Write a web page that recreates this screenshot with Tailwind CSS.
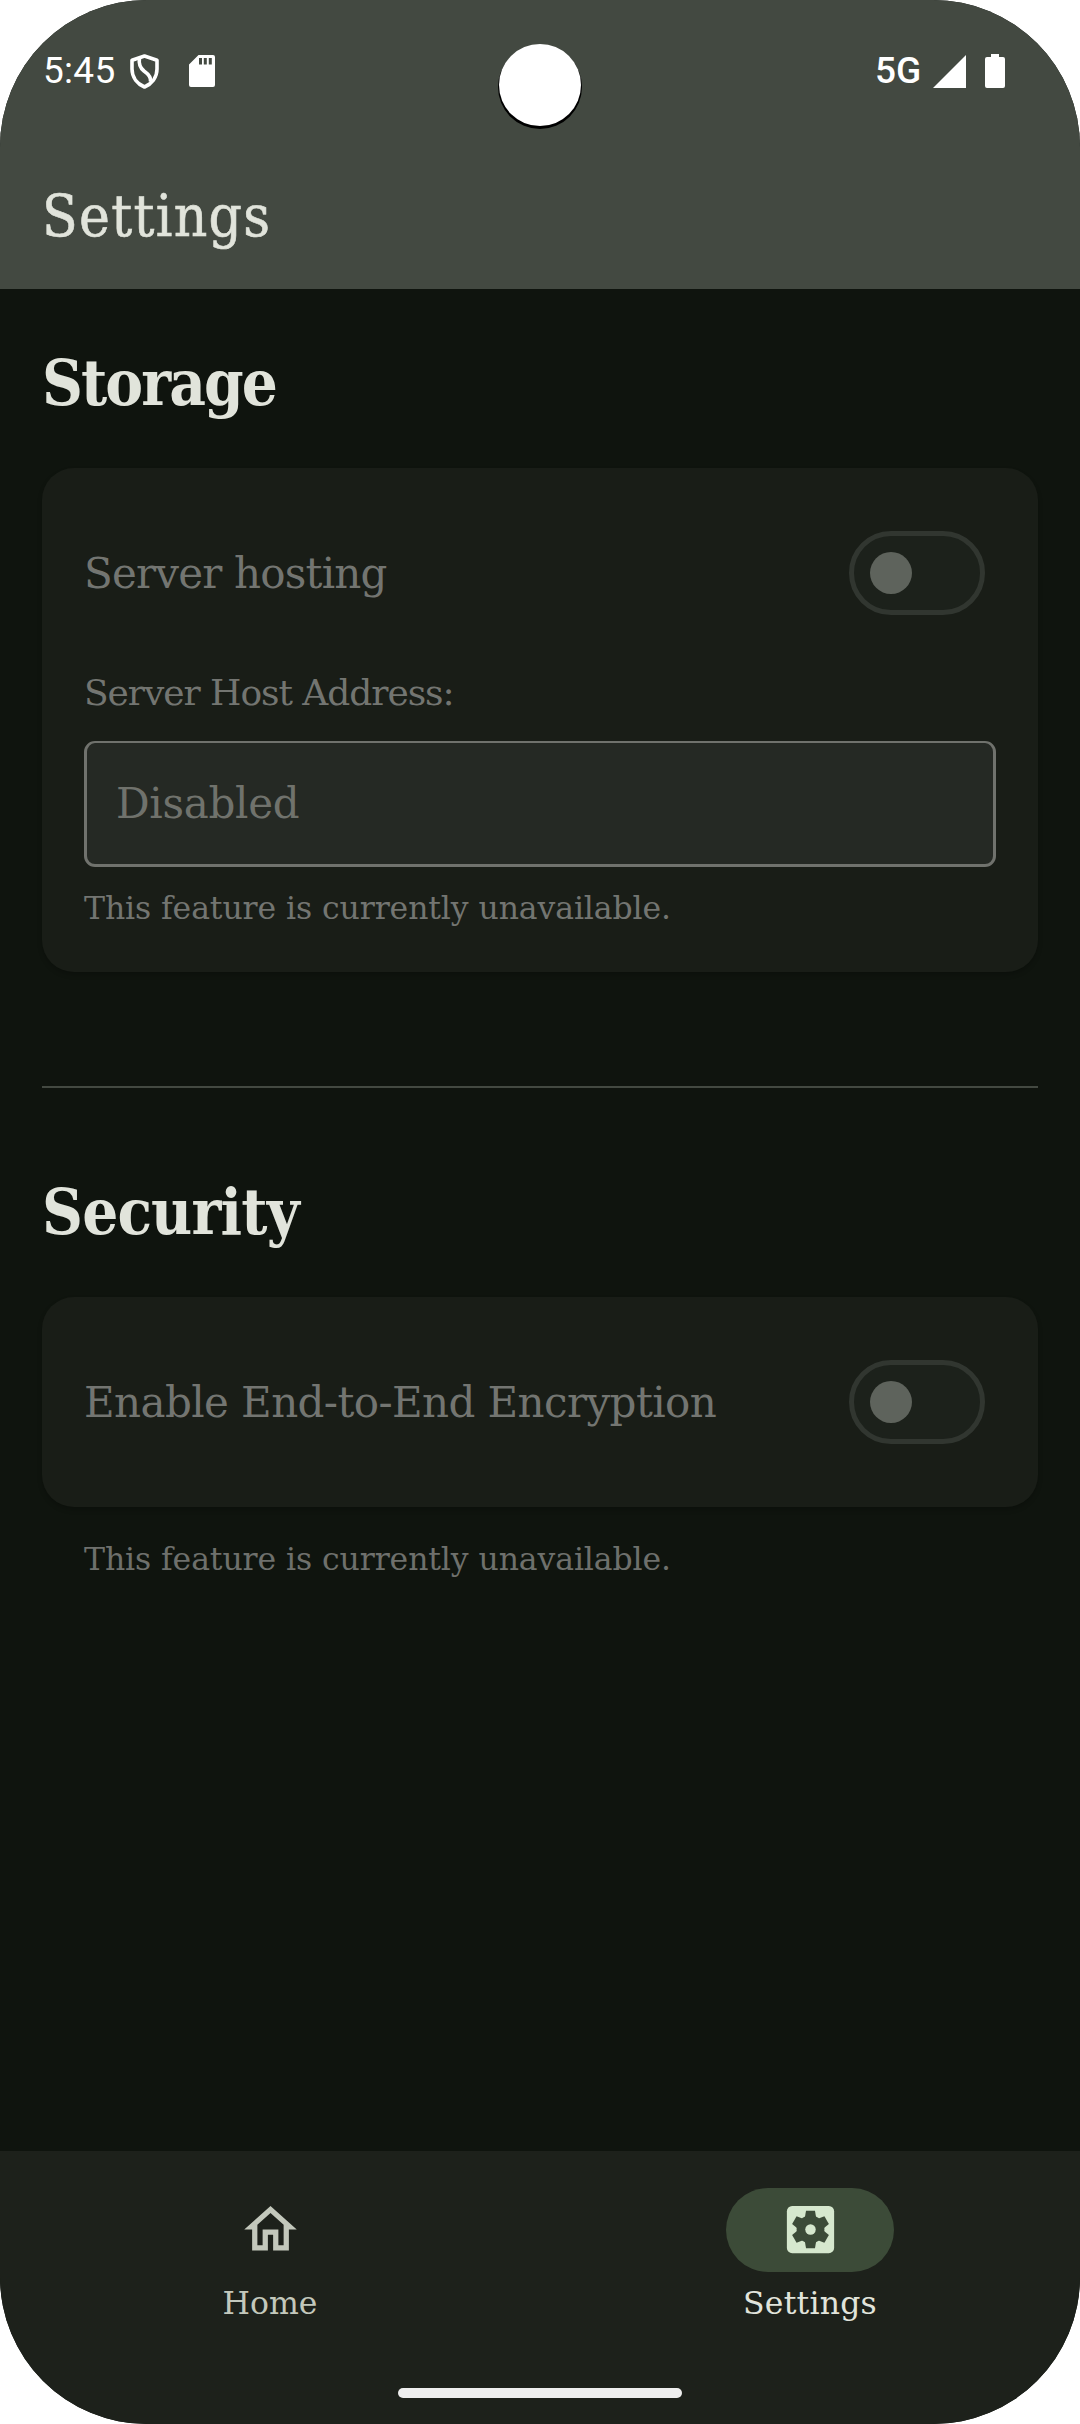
<!DOCTYPE html>
<html lang="en">
<head>
<meta charset="utf-8">
<title>Settings</title>
<script src="https://cdn.jsdelivr.net/npm/@tailwindcss/browser@4"></script>
</head>
<body class="bg-white">
<div class="relative flex h-[2424px] w-[1080px] flex-col overflow-hidden rounded-[147px] bg-[#0f140e] font-['DejaVu_Serif',serif] text-[#e1e4db]">

  <header class="h-[289px] bg-[#434941]">
    <!-- Status bar -->
    <div class="flex h-[140px] items-center justify-between pl-[43px] pr-[75px] font-[Roboto,sans-serif] text-[37px] text-white">
      <div class="flex items-center">
        <span class="w-[87px] pt-[2px] leading-[42px] tracking-[0.3px]">5:45</span>
        <svg class="mt-[3px] h-[35px] w-[29px]" viewBox="0 0 29 35" fill="none" stroke="currentColor" stroke-width="3.6" stroke-linejoin="round">
          <path d="M14.5 2 L27 6.3 V15 C27 23.5 21.5 30 14.5 33 C7.500 30 2 23.500 2 15 V6.300 Z"/>
          <path d="M9.500 4 C8.500 10 9.500 13.500 14 17 C19 20.500 21.500 23.500 20.500 28"/>
        </svg>
        <svg class="ml-[30px] mt-[2px] h-[32px] w-[26px]" viewBox="0 0 26 32" fill="currentColor">
          <path fill-rule="evenodd" d="M9.500 0 H24 Q26 0 26 2 V30 Q26 32 24 32 H2 Q0 32 0 30 V9.500 Z M10 3 V9.500 H13 V3 Z M14.800 3 V9.500 H17.800 V3 Z M19.800 3 V9.500 H22.800 V3 Z"/>
        </svg>
      </div>
      <div class="flex items-center">
        <span class="w-[58px] pt-[2px] font-medium leading-[42px]">5G</span>
        <svg class="mt-[2px] h-[33px] w-[33px]" viewBox="0 0 33 33" fill="currentColor"><path d="M33 0 V33 H0 Z"/></svg>
        <svg class="ml-[19px] mt-[2px] h-[34px] w-[20px]" viewBox="0 0 20 34" fill="currentColor">
          <path d="M6 0 H14 V3 H18 Q20 3 20 5 V32 Q20 34 18 34 H2 Q0 34 0 32 V5 Q0 3 2 3 H6 Z"/>
        </svg>
      </div>
    </div>
    <h1 class="pl-[42px] pt-[38px] font-['DejaVu_Serif_Condensed','DejaVu_Serif',serif] text-[58px] leading-[76px] font-stretch-condensed tracking-[1.3px] [-webkit-text-stroke:0.6px_#e1e4db]">Settings</h1>
  </header>

  <!-- Camera cutout -->
  <div class="absolute left-[498px] top-[45px] h-[84px] w-[84px] rounded-full bg-black"></div>
  <div class="absolute left-[499px] top-[44px] h-[82px] w-[82px] rounded-full bg-white"></div>

  <main class="flex-1 px-[42px] pt-[54px]">
    <section>
      <h2 class="font-['DejaVu_Serif_Condensed','DejaVu_Serif',serif] text-[63px] font-bold leading-[80px] font-stretch-condensed tracking-[-1.9px]">Storage</h2>
      <div class="mt-[45px] h-[504px] rounded-[32px] bg-[#191d17] px-[42px] pt-[63px] text-[#737571] shadow-[0_3px_5px_rgba(0,0,0,0.2)]">
        <div class="flex h-[84px] items-center justify-between pr-[11px]">
          <span class="text-[42px] tracking-[-0.8px]">Server hosting</span>
          <div class="flex h-[84px] w-[136px] items-center rounded-full border-[5px] border-[#313630] bg-[#1c211b] pl-[16px]">
            <div class="size-[42px] rounded-full bg-[#5e635c]"></div>
          </div>
        </div>
        <div class="mt-[54px] text-[36px] leading-[48px] tracking-[-1.05px]">Server Host Address:</div>
        <div class="mt-[24px] flex h-[126px] items-center rounded-[11px] border-[3px] border-t-2 border-[#70726d] bg-[#252924] pl-[29px] text-[42px] tracking-[-0.3px] text-[#70726c]">Disabled</div>
        <p class="mt-[20px] text-[31.5px] leading-[42px] tracking-[-0.1px]">This feature is currently unavailable.</p>
      </div>
    </section>

    <div class="mt-[114px] h-[2px] bg-[#434941]"></div>

    <section class="mt-[84px]">
      <h2 class="font-['DejaVu_Serif_Condensed','DejaVu_Serif',serif] text-[63px] font-bold leading-[80px] font-stretch-condensed tracking-[-0.8px]">Security</h2>
      <div class="mt-[45px] h-[210px] rounded-[32px] bg-[#191d17] px-[42px] pt-[63px] text-[#737571] shadow-[0_3px_5px_rgba(0,0,0,0.2)]">
        <div class="flex h-[84px] items-center justify-between pr-[11px]">
          <span class="text-[42px] tracking-[-0.6px]">Enable End-to-End Encryption</span>
          <div class="flex h-[84px] w-[136px] items-center rounded-full border-[5px] border-[#313630] bg-[#1c211b] pl-[16px]">
            <div class="size-[42px] rounded-full bg-[#5e635c]"></div>
          </div>
        </div>
      </div>
      <p class="mt-[31px] pl-[42px] text-[31.5px] leading-[42px] tracking-[-0.1px] text-[#6e706c]">This feature is currently unavailable.</p>
    </section>
  </main>

  <nav class="relative grid h-[273px] grid-cols-2 bg-[#1d211b] pt-[37px] text-[31.5px] leading-[42px]">
    <div class="flex flex-col items-center text-[#c3c8bc]">
      <div class="flex h-[84px] w-[168px] items-center justify-center pb-[2px]">
        <svg class="size-[63px]" viewBox="0 0 24 24" fill="currentColor"><path d="M12 5.690l5 4.500V18h-2v-6H9v6H7v-7.810l5-4.500M12 3L2 12h3v8h6v-6h2v6h6v-8h3L12 3z"/></svg>
      </div>
      <span class="mt-[10px]">Home</span>
    </div>
    <div class="flex flex-col items-center">
      <div class="flex h-[84px] w-[168px] items-center justify-center rounded-full bg-[#3c4b38] pb-[2px]">
        <svg class="size-[63px]" viewBox="-12 -12 24 24">
          <rect x="-9" y="-9" width="18" height="18" rx="2" fill="#d6e8ce"/>
          <g fill="#3c4b38">
            <circle r="5.300"/>
            <path id="tooth" d="M-1.700 -7.100 H1.700 L2.250 -4 H-2.250 Z"/>
            <use href="#tooth" transform="rotate(60)"/>
            <use href="#tooth" transform="rotate(120)"/>
            <use href="#tooth" transform="rotate(180)"/>
            <use href="#tooth" transform="rotate(240)"/>
            <use href="#tooth" transform="rotate(300)"/>
          </g>
          <circle r="2" fill="#d6e8ce"/>
        </svg>
      </div>
      <span class="mt-[10px] tracking-[0.2px]">Settings</span>
    </div>
    <!-- Gesture handle -->
    <div class="absolute bottom-[26px] left-[398px] h-[10px] w-[284px] rounded-[5px] bg-[#eeeeee]"></div>
  </nav>
</div>
</body>
</html>
